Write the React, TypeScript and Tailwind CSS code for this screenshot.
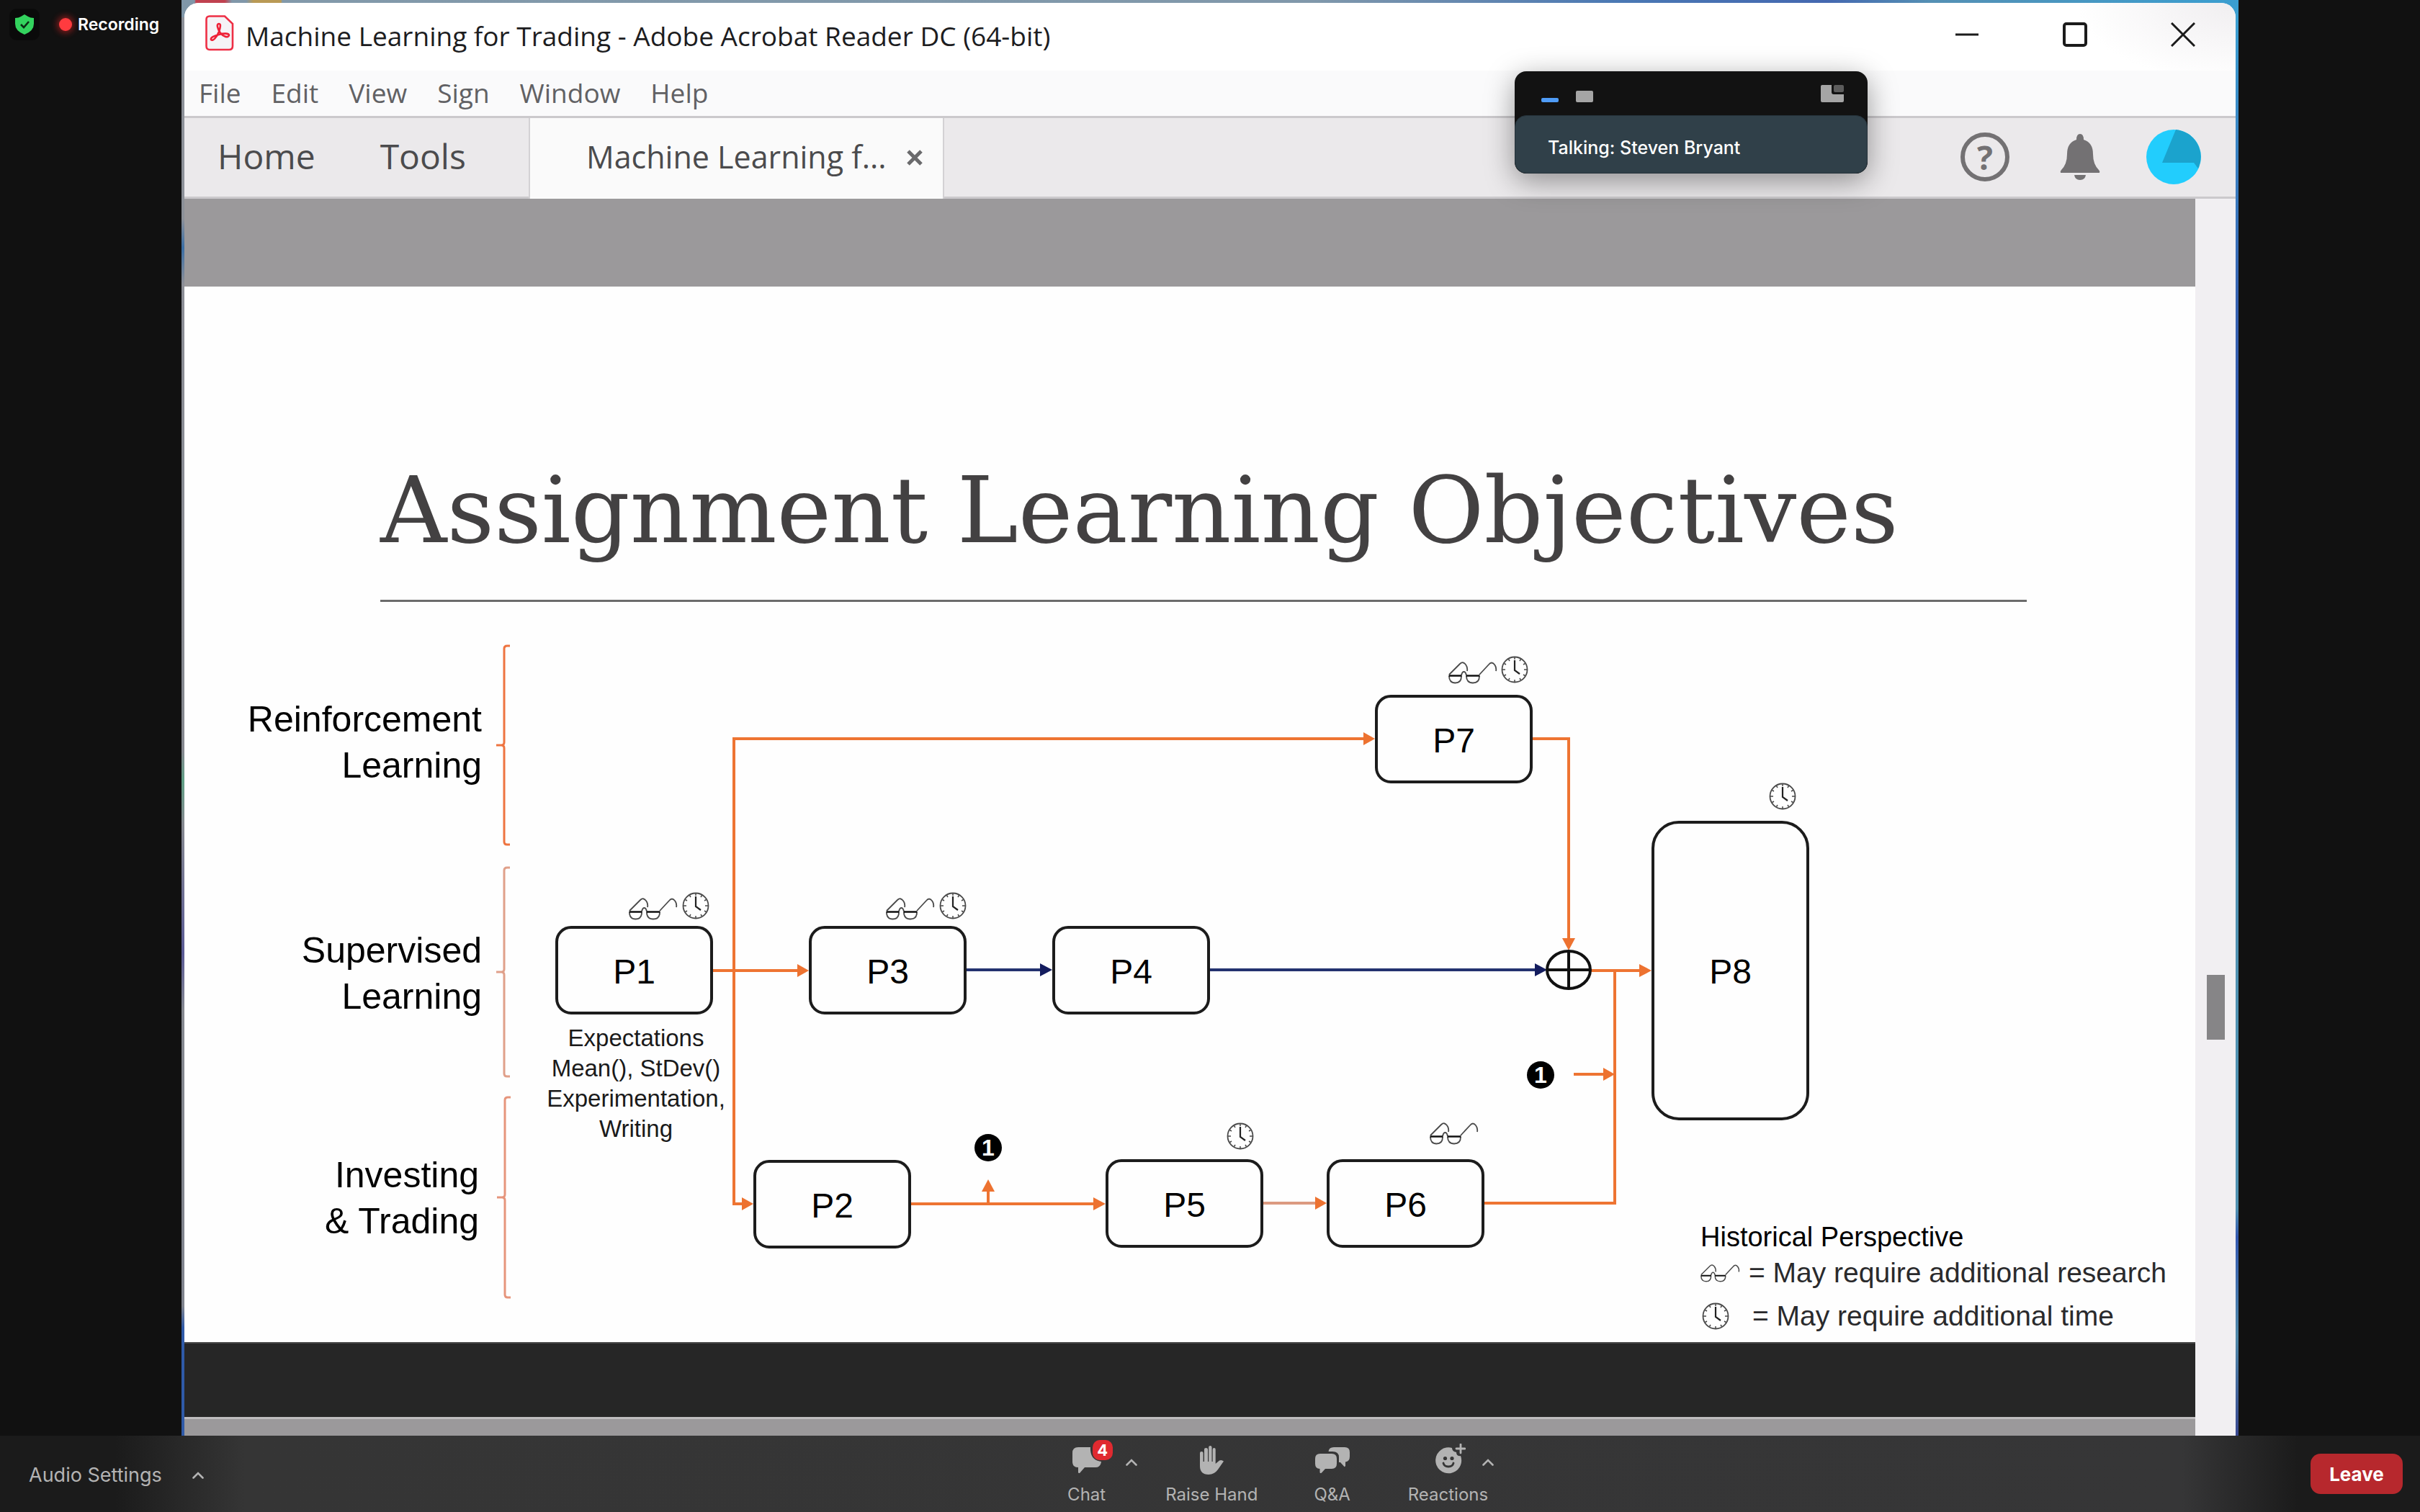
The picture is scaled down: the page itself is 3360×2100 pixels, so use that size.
import React from "react";

const ORIGIN_X = 256;
const ORIGIN_Y = 837;

type Box = { id: string; x: number; y: number; w: number; h: number; tall?: boolean };

const nodes: Box[] = [
  { id: "P1", x: 771, y: 1287, w: 219, h: 123 },
  { id: "P3", x: 1123, y: 1287, w: 219, h: 123 },
  { id: "P4", x: 1461, y: 1287, w: 219, h: 123 },
  { id: "P2", x: 1046, y: 1612, w: 219, h: 123 },
  { id: "P5", x: 1535, y: 1611, w: 219, h: 123 },
  { id: "P6", x: 1842, y: 1611, w: 219, h: 123 },
  { id: "P7", x: 1909, y: 966, w: 219, h: 123 },
  { id: "P8", x: 2293, y: 1141, w: 219, h: 416, tall: true },
];

const at = (x: number, y: number) => ({ left: x - ORIGIN_X, top: y - ORIGIN_Y });

const marks: { kind: "glasses" | "clock"; x: number; y: number }[] = [
  { kind: "glasses", x: 873, y: 1248 },
  { kind: "clock", x: 947, y: 1240 },
  { kind: "glasses", x: 1230, y: 1248 },
  { kind: "clock", x: 1304, y: 1240 },
  { kind: "glasses", x: 2011, y: 920 },
  { kind: "clock", x: 2084, y: 912 },
  { kind: "clock", x: 2456, y: 1088 },
  { kind: "clock", x: 1703, y: 1560 },
  { kind: "glasses", x: 1985, y: 1560 },
];

const rowLabels = [
  { lines: ["Reinforcement", "Learning"], right: 669, y: 968 },
  { lines: ["Supervised", "Learning"], right: 669, y: 1289 },
  { lines: ["Investing", "& Trading"], right: 665, y: 1601 },
];

const badges = [
  { x: 1353, y: 1576 },
  { x: 2120, y: 1475 },
];

function Glasses({ className }: { className: string }) {
  return (
    <svg viewBox="0 0 68 31" className={className} fill="none" stroke="#4a4a4a" strokeWidth="1.8" aria-hidden="true">
      <path d="M1 18 L16 3 Q20 -1 24 4 Q27 8 26 13" />
      <path d="M43 18 L56 4 Q60 -1 64 4 Q67 8 66 13" />
      <path d="M18 19 Q19 14 21.500 14 Q24 14 25 19" />
      <path d="M1 20 Q1 29.500 9.500 29.500 Q18 29.500 18 20" />
      <path d="M25 20 Q25 29.500 34 29.500 Q43 29.500 43 20" />
      <path d="M0.500 19.500 H18.500 M24.500 19.500 H43.500" stroke="#111" strokeWidth="2.600" />
    </svg>
  );
}

function Clock({ className }: { className: string }) {
  return (
    <svg viewBox="0 0 38 38" className={className} fill="none" stroke="#4a4a4a" strokeWidth="1.800" aria-hidden="true">
      <circle cx="19" cy="19" r="17.500" />
      <path d="M19 2 V5 M19 33 V36 M2 19 H6 M32 19 H36 M10.500 4.500 L12 7 M27.500 4.500 L26 7 M4.500 10.500 L7 12 M33.500 10.500 L31 12 M4.500 27.500 L7 26 M33.500 27.500 L31 26 M10.500 33.500 L12 31 M27.500 33.500 L26 31" strokeWidth="1.500" />
      <path d="M19 6 V20 L26 25" stroke="#222" strokeWidth="2.200" />
    </svg>
  );
}

function Connectors() {
  return (
    <svg viewBox="256 837 2792 1028" className="absolute left-0 top-0 h-[1028px] w-[2792px]" fill="none" aria-hidden="true">
      <g stroke="#ee7440" strokeWidth="3">
        <path d="M708 898 H704 Q700 898 700 902 V1032 Q700 1036 696 1036 H689 H696 Q700 1036 700 1040 V1170 Q700 1174 704 1174 H708" />
        <path d="M708 1206 H704 Q700 1206 700 1210 V1347 Q700 1351 696 1351 H689 H696 Q700 1351 700 1355 V1492 Q700 1496 704 1496 H708" stroke="#e0a08a" />
        <path d="M709 1525 H705 Q701 1525 701 1529 V1660 Q701 1664 697 1664 H690 H697 Q701 1664 701 1668 V1799 Q701 1803 705 1803 H709" stroke="#e6957c" />
      </g>
      <g stroke="#ee7432" strokeWidth="4">
        <path d="M990 1349 H1112" />
        <path d="M1900 1027 H1019 V1673 H1036" />
        <path d="M2128 1027 H2178 V1308" />
        <path d="M2208 1349 H2282" />
        <path d="M2061 1672 H2242 V1349" />
        <path d="M2185 1493 H2230" />
        <path d="M1265 1673 H1524 M1372 1673 V1652" />
        <path d="M1754 1672 H1830" stroke="#dc9a80" />
      </g>
      <g stroke="#23326f" strokeWidth="4">
        <path d="M1342 1348 H1450" />
        <path d="M1680 1348 H2136" />
      </g>
      <g fill="#ed7230">
        <path d="M1107 1340 L1123 1349 L1107 1358 Z" />
        <path d="M1893 1018 L1909 1027 L1893 1036 Z" />
        <path d="M1030 1664 L1046 1673 L1030 1682 Z" />
        <path d="M2169 1304 L2187 1304 L2178 1321 Z" />
        <path d="M2276 1340 L2293 1349 L2276 1358 Z" />
        <path d="M2226 1484 L2242 1493 L2226 1502 Z" />
        <path d="M1518 1664 L1535 1673 L1518 1682 Z" />
        <path d="M1826 1663 L1842 1672 L1826 1681 Z" />
        <path d="M1363 1656 L1372 1639 L1381 1656 Z" />
      </g>
      <g fill="#131c5e">
        <path d="M1444 1339 L1461 1348 L1444 1357 Z" />
        <path d="M2131 1339 L2148 1348 L2131 1357 Z" />
      </g>
      <ellipse cx="2178" cy="1348" rx="30" ry="26" stroke="#111" strokeWidth="4" />
      <path d="M2178 1322 V1374 M2148 1348 H2208" stroke="#111" strokeWidth="4" />
    </svg>
  );
}

function Diagram() {
  return (
    <div className="relative h-[1028px] w-full font-['Liberation_Sans',sans-serif] text-black">
      <Connectors />
      {rowLabels.map((r) => (
        <div
          key={r.lines[0]}
          className="absolute w-[360px] text-right text-[50px] leading-[64px]"
          style={at(r.right - 360, r.y)}
        >
          {r.lines.map((l) => (
            <p key={l}>{l}</p>
          ))}
        </div>
      ))}
      {nodes.map((n) => (
        <div
          key={n.id}
          className={
            "absolute flex items-center justify-center border-4 border-[#1c1c1c] bg-[#fefefe] pt-1 text-[48px] " +
            (n.tall ? "rounded-[38px]" : "rounded-[22px]")
          }
          style={{ ...at(n.x, n.y), width: n.w, height: n.h }}
        >
          {n.id}
        </div>
      ))}
      {marks.map((m) => (
        <div key={m.kind + m.x} className="absolute" style={at(m.x, m.y)}>
          {m.kind === "clock" ? <Clock className="h-[38px] w-[38px]" /> : <Glasses className="h-[31px] w-[68px]" />}
        </div>
      ))}
      {badges.map((b) => (
        <div
          key={b.x}
          className="absolute flex h-[38px] w-[38px] items-center justify-center rounded-full bg-black text-[32px] font-bold leading-none text-white"
          style={at(b.x, b.y)}
        >
          1
        </div>
      ))}
      <div className="absolute w-[290px] text-center text-[33px] leading-[42px] text-[#1a1a1a]" style={at(738, 1422)}>
        <p>Expectations</p>
        <p>Mean(), StDev()</p>
        <p>Experimentation,</p>
        <p>Writing</p>
      </div>
      <div className="absolute text-[39px] text-[#2a2a2c]" style={at(2361, 1694)}>
        <p className="text-[38px] leading-[50px] text-black">Historical Perspective</p>
        <p className="flex items-center gap-3 whitespace-nowrap leading-[50px]">
          <Glasses className="h-[25px] w-[55px]" />= May require additional research
        </p>
        <p className="mt-[10px] flex items-center gap-8 whitespace-nowrap leading-[50px]">
          <Clock className="ml-[2px] h-[38px] w-[38px]" />= May require additional time
        </p>
      </div>
    </div>
  );
}

function PdfIcon() {
  return (
    <svg viewBox="0 0 40 50" className="h-[50px] w-10" fill="none" aria-hidden="true">
      <path d="M6 1.500 H27 L38 12 V43 Q38 48 33 48 H6 Q1.500 48 1.500 43 V6 Q1.500 1.500 6 1.500 Z" fill="#f5f3f6" stroke="#ee2f45" strokeWidth="2.600" />
      <path d="M19 12 C15 12 17 19 21 25 C25 30 32 32 33 28 C33 25 25 25 19 27 C12 29 7 31 8 34 C10 37 16 31 19 23 C21 17 22 12 19 12 Z" stroke="#ee2137" strokeWidth="2.600" />
    </svg>
  );
}

function TitleBar() {
  return (
    <header className="flex h-[94px] items-start bg-[radial-gradient(ellipse_220px_110px_at_top_right,#f0eef0,#ffffff)] pl-[29px]">
      <div className="flex flex-1 items-start gap-4 pt-[17px]">
        <PdfIcon />
        <h1 className="whitespace-nowrap text-[37px] leading-[58px] text-[#1d1d1f]">
          Machine Learning for Trading - Adobe Acrobat Reader DC (64-bit)
        </h1>
      </div>
      <div className="flex items-center gap-[116px] pr-14 pt-[27px] text-[#1b1b1b]">
        <button type="button" aria-label="Minimize">
          <svg viewBox="0 0 34 34" className="h-[34px] w-[34px]"><path d="M1 17 H33" stroke="currentColor" strokeWidth="3" /></svg>
        </button>
        <button type="button" aria-label="Maximize">
          <svg viewBox="0 0 34 34" className="h-[34px] w-[34px]" fill="none"><rect x="2" y="2" width="30" height="30" rx="3" stroke="currentColor" strokeWidth="4" /></svg>
        </button>
        <button type="button" aria-label="Close">
          <svg viewBox="0 0 34 34" className="h-[34px] w-[34px]"><path d="M1 1 L33 33 M33 1 L1 33" stroke="currentColor" strokeWidth="3" /></svg>
        </button>
      </div>
    </header>
  );
}

function MenuBar() {
  return (
    <nav className="flex h-[63px] items-center gap-[42px] bg-[#fafafb] pb-[2px] pl-[20px] text-[37px] leading-[50px] text-[#616164]">
      {["File", "Edit", "View", "Sign", "Window", "Help"].map((m) => (
        <button key={m} type="button">{m}</button>
      ))}
    </nav>
  );
}

function TabBar() {
  return (
    <div className="flex h-[115px] items-stretch border-y-[3px] border-[#cbc9cc] bg-[#ebe9eb] text-[#4b4b4d]">
      <div className="flex w-[478px] items-center gap-[90px] pb-[3px] pl-[46px] text-[48px]">
        <button type="button">Home</button>
        <button type="button">Tools</button>
      </div>
      <div className="-mb-[3px] flex w-[577px] items-center border-x-2 border-[#d3d1d4] bg-[#fafafa] pb-[3px] pl-[78px] text-[43px]">
        <span className="mr-[28px] whitespace-nowrap">Machine Learning f...</span>
        <button type="button" aria-label="Close tab">
          <svg viewBox="0 0 22 22" className="h-[22px] w-[22px]"><path d="M2 2 L20 20 M20 2 L2 20" stroke="#6a6a6c" strokeWidth="5" /></svg>
        </button>
      </div>
      <div className="flex flex-1 items-center justify-end pb-[2px] pr-12">
        <button type="button" aria-label="Help" className="mr-[70px] flex h-[68px] w-[68px] items-center justify-center rounded-full border-[6px] border-[#737173] font-['Open_Sans',sans-serif] text-[46px] font-bold leading-none text-[#737173]">
          ?
        </button>
        <button type="button" aria-label="Notifications" className="mr-[64px]">
          <svg viewBox="0 0 56 64" className="h-16 w-14" fill="#737173">
            <path d="M28 0 Q33 0 33 8 Q46 12 46 28 Q46 42 54 50 Q56 52 55 54 H1 Q0 52 2 50 Q10 42 10 28 Q10 12 23 8 Q23 0 28 0 Z" />
            <path d="M20 57 H36 Q35 64 28 64 Q21 64 20 57 Z" />
          </svg>
        </button>
        <button type="button" aria-label="Account">
          <svg viewBox="0 0 76 76" className="h-[76px] w-[76px]">
            <circle cx="38" cy="38" r="38" fill="#22cdfd" />
            <path d="M41 0 A38 38 0 0 1 72 54 L66 46 L22 46 Z" fill="#1ba3cd" />
          </svg>
        </button>
      </div>
    </div>
  );
}

function Document() {
  return (
    <div className="flex flex-1">
      <main className="flex min-w-0 flex-1 flex-col bg-[#9b999b]">
        <div className="h-[122px]" />
        <article className="overflow-hidden bg-[#fefefe] pt-[236px]">
          <div className="ml-[272px] mr-[234px] border-b-[3px] border-[#6c6c6c] pb-[49px]">
            <h2 className="whitespace-nowrap font-['DejaVu_Serif',serif] text-[128px] leading-[150px] text-[#434142]">
              Assignment Learning Objectives
            </h2>
          </div>
          <Diagram />
        </article>
        <div className="h-[104px] border-t-2 border-[#4a4a4a] bg-[#262626]" />
        <div className="flex-1 border-t-[3px] border-[#bfbdbf]" />
      </main>
      <aside className="w-14 bg-[#f1eff2]">
        <div className="mx-auto mt-[1078px] h-[90px] w-[25px] bg-[#868587]" />
      </aside>
    </div>
  );
}

function TalkingPanel() {
  return (
    <section className="absolute right-[515px] top-[99px] w-[490px] overflow-hidden rounded-2xl bg-[#121212] font-['Inter',sans-serif] shadow-[0_10px_40px_rgba(0,0,0,0.4)]">
      <div className="flex h-[61px] items-end justify-between pb-[18px] pl-[37px] pr-[33px]">
        <div className="flex items-end gap-6">
          <button type="button" aria-label="Hide video" className="h-[6px] w-6 rounded-[2px] bg-[#4f9cf7]" />
          <button type="button" aria-label="Show active speaker" className="h-4 w-6 rounded-[2px] bg-[#a5a5a5]" />
        </div>
        <button type="button" aria-label="Show thumbnails">
          <svg viewBox="0 0 32 24" className="h-6 w-8">
            <path d="M2 0 H15 V10 Q15 13 18 13 H32 V22 Q32 24 30 24 H2 Q0 24 0 22 V2 Q0 0 2 0 Z" fill="#a5a5a5" />
            <rect x="18" y="0" width="14" height="10" rx="2" fill="#5c5c5c" />
          </svg>
        </button>
      </div>
      <p className="rounded-2xl border border-[#25323a] bg-[#304049] pb-5 pl-[45px] pt-[29px] text-[25px] font-medium leading-[30px] text-white">
        Talking: Steven Bryant
      </p>
    </section>
  );
}

function Chevron() {
  return (
    <svg viewBox="0 0 16 10" className="h-[10px] w-4" fill="none" aria-hidden="true">
      <path d="M1.500 8.500 L8 2 L14.500 8.500" stroke="#b3b3b3" strokeWidth="2.600" strokeLinecap="round" />
    </svg>
  );
}

function ToolButton({ label, children }: { label: string; children: React.ReactNode }) {
  return (
    <button type="button" className="flex flex-col items-center gap-2">
      <span className="relative flex h-12 items-center">{children}</span>
      <span className="whitespace-nowrap text-[24px] leading-8">{label}</span>
    </button>
  );
}

function MeetingBar() {
  return (
    <footer className="grid h-[106px] grid-cols-[1480fr_auto_1284fr] bg-[linear-gradient(90deg,#1b1b1b_160px,#353535_340px,#363637_calc(100%-330px),#1b1b1b_calc(100%-170px))] font-['Inter',sans-serif] text-[#b3b3b3]">
      <div className="flex items-center gap-[42px] pl-10 pt-1 text-[27px]">
        <button type="button">Audio Settings</button>
        <button type="button" aria-label="Audio options"><Chevron /></button>
      </div>
      <div className="flex items-start pt-[10px]">
        <ToolButton label="Chat">
          <svg viewBox="0 0 40 36" className="h-9 w-10" fill="#b3b3b3">
            <path d="M8 0 H25 Q24 18 40 20 Q39 28 32 28 H17 L10 36 Q9 37 8 35 V28 Q0 28 0 20 V8 Q0 0 8 0 Z" />
          </svg>
          <span className="absolute left-7 top-[-4px] flex h-7 w-7 items-center justify-center rounded-[10px] bg-[#e02a30] text-[22px] font-bold leading-none text-white">4</span>
        </ToolButton>
        <button type="button" aria-label="Chat options" className="ml-7 mr-[39px] flex pt-[22px]"><Chevron /></button>
        <ToolButton label="Raise Hand">
          <svg viewBox="0 0 33 40" className="h-10 w-[33px]" fill="#b3b3b3">
            <path d="M0 10 Q0 8 2.300 8 Q4.600 8 4.600 10 V22 H6 V5 Q6 3 8.500 3 Q11 3 11 5 V22 H12.200 V2 Q12.200 0 14.300 0 Q16.500 0 16.500 2 V22 H17.700 V5 Q17.700 3 19.700 3 Q21.700 3 21.700 5 V25 L27 20.500 Q30 19 33 21.500 L25 33 Q20 40 12 40 Q0 40 0 28 Z" />
          </svg>
        </ToolButton>
        <div className="ml-[78px] mr-[80px]">
          <ToolButton label="Q&A">
            <svg viewBox="0 0 48 36" className="h-9 w-12" fill="#b3b3b3">
              <path d="M26 0 H41 Q48 0 48 7 V13 Q48 20 42 20.500 V26 Q41 28 40 26.500 L35 21 H33 V14 Q33 6 24 6 H18.500 Q19 0 26 0 Z" />
              <path d="M7 9 H23 Q30 9 30 16 V23 Q30 30 23 30 H14 L9 35.500 Q7 37 6.500 35 V30 Q0 30 0 23 V16 Q0 9 7 9 Z" />
            </svg>
          </ToolButton>
        </div>
        <ToolButton label="Reactions">
          <svg viewBox="0 0 42 42" className="mb-1 ml-2 h-[42px] w-[42px]">
            <path d="M23 6 A18 18 0 1 0 35 17 Q29 18 29 12 Q23 11 23 6 Z" fill="#b3b3b3" />
            <path d="M35 1 V13 M29 7 H41" stroke="#b3b3b3" strokeWidth="2.800" strokeLinecap="round" />
            <circle cx="13.500" cy="20.500" r="2.600" fill="#363636" />
            <circle cx="23" cy="20.500" r="2.600" fill="#363636" />
            <path d="M11 27 Q12 32 18 32 Q24 32 25 27" stroke="#363636" strokeWidth="2.800" fill="none" strokeLinecap="round" />
          </svg>
        </ToolButton>
        <button type="button" aria-label="Reactions options" className="-ml-2 flex pt-[22px]"><Chevron /></button>
      </div>
      <div className="flex items-center justify-end pr-6">
        <button type="button" className="h-14 w-32 rounded-[14px] bg-[#b7282d] text-[26px] font-bold text-white">Leave</button>
      </div>
    </footer>
  );
}

function RecordingStatus() {
  return (
    <div className="flex h-11 items-center pl-[13px] font-['Inter',sans-serif] text-white">
      <span className="flex h-11 w-[42px] items-center justify-center rounded-[10px] bg-[#0a0a0a]">
        <svg viewBox="0 0 26 28" className="h-7 w-[26px]">
          <path d="M13 0 L18 3 Q21 5 26 5 V13 Q26 23 13 28 Q0 23 0 13 V5 Q5 5 8 3 Z" fill="#33d35e" />
          <path d="M8 14 L12 18 L19 10" fill="none" stroke="#0b2b14" strokeWidth="2.600" />
        </svg>
      </span>
      <span className="ml-[27px] mr-2 h-[18px] w-[18px] rounded-full bg-[#ff3b3f] shadow-[0_0_8px_3px_rgba(255,40,40,0.45)]" />
      <span className="text-[23px] font-semibold">Recording</span>
    </div>
  );
}

export default function App() {
  return (
    <div className="flex min-h-screen flex-col bg-[#111111]">
      <div className="flex flex-1">
        <aside className="w-[252px] pt-3">
          <RecordingStatus />
        </aside>
        <div className="relative flex min-w-0 flex-1 bg-[linear-gradient(90deg,#8097a9_18px,#c0414f_20px,#c0414f_60px,#8097a9_70px,#8097a9_90px,#b99a55_100px,#b99a55_138px,#8299aa_140px,#8098ab_55%,#4a78b4_70%,#4468b0_80%,#5590b4_85%,#3a9ed0)] p-1">
          <div className="absolute bottom-0 left-0 top-6 w-1 bg-[linear-gradient(180deg,#8c9098_280px,#3a6ea5_320px,#8c8e96_370px,#85888f_1020px,#5f9f85_1060px,#85888f_1120px,#5a5a95_1300px,#85888f_1380px,#7f838d_1790px,#2f5aa8_1820px)]" />
          <div className="absolute bottom-0 right-0 top-6 w-1 bg-[linear-gradient(180deg,#3a9ed0,#3560b0_20%,#2f4fa8_45%,#4f90b0_60%,#4f90b0_84%,#3358b0_86%,#4f88a8_93%,#37468f)]" />
          <div className="-mb-1 flex flex-1 flex-col overflow-hidden rounded-t-[20px] bg-white font-['Open_Sans',sans-serif]">
            <TitleBar />
            <MenuBar />
            <TabBar />
            <Document />
          </div>
          <TalkingPanel />
        </div>
        <aside className="w-[252px]" />
      </div>
      <MeetingBar />
    </div>
  );
}
